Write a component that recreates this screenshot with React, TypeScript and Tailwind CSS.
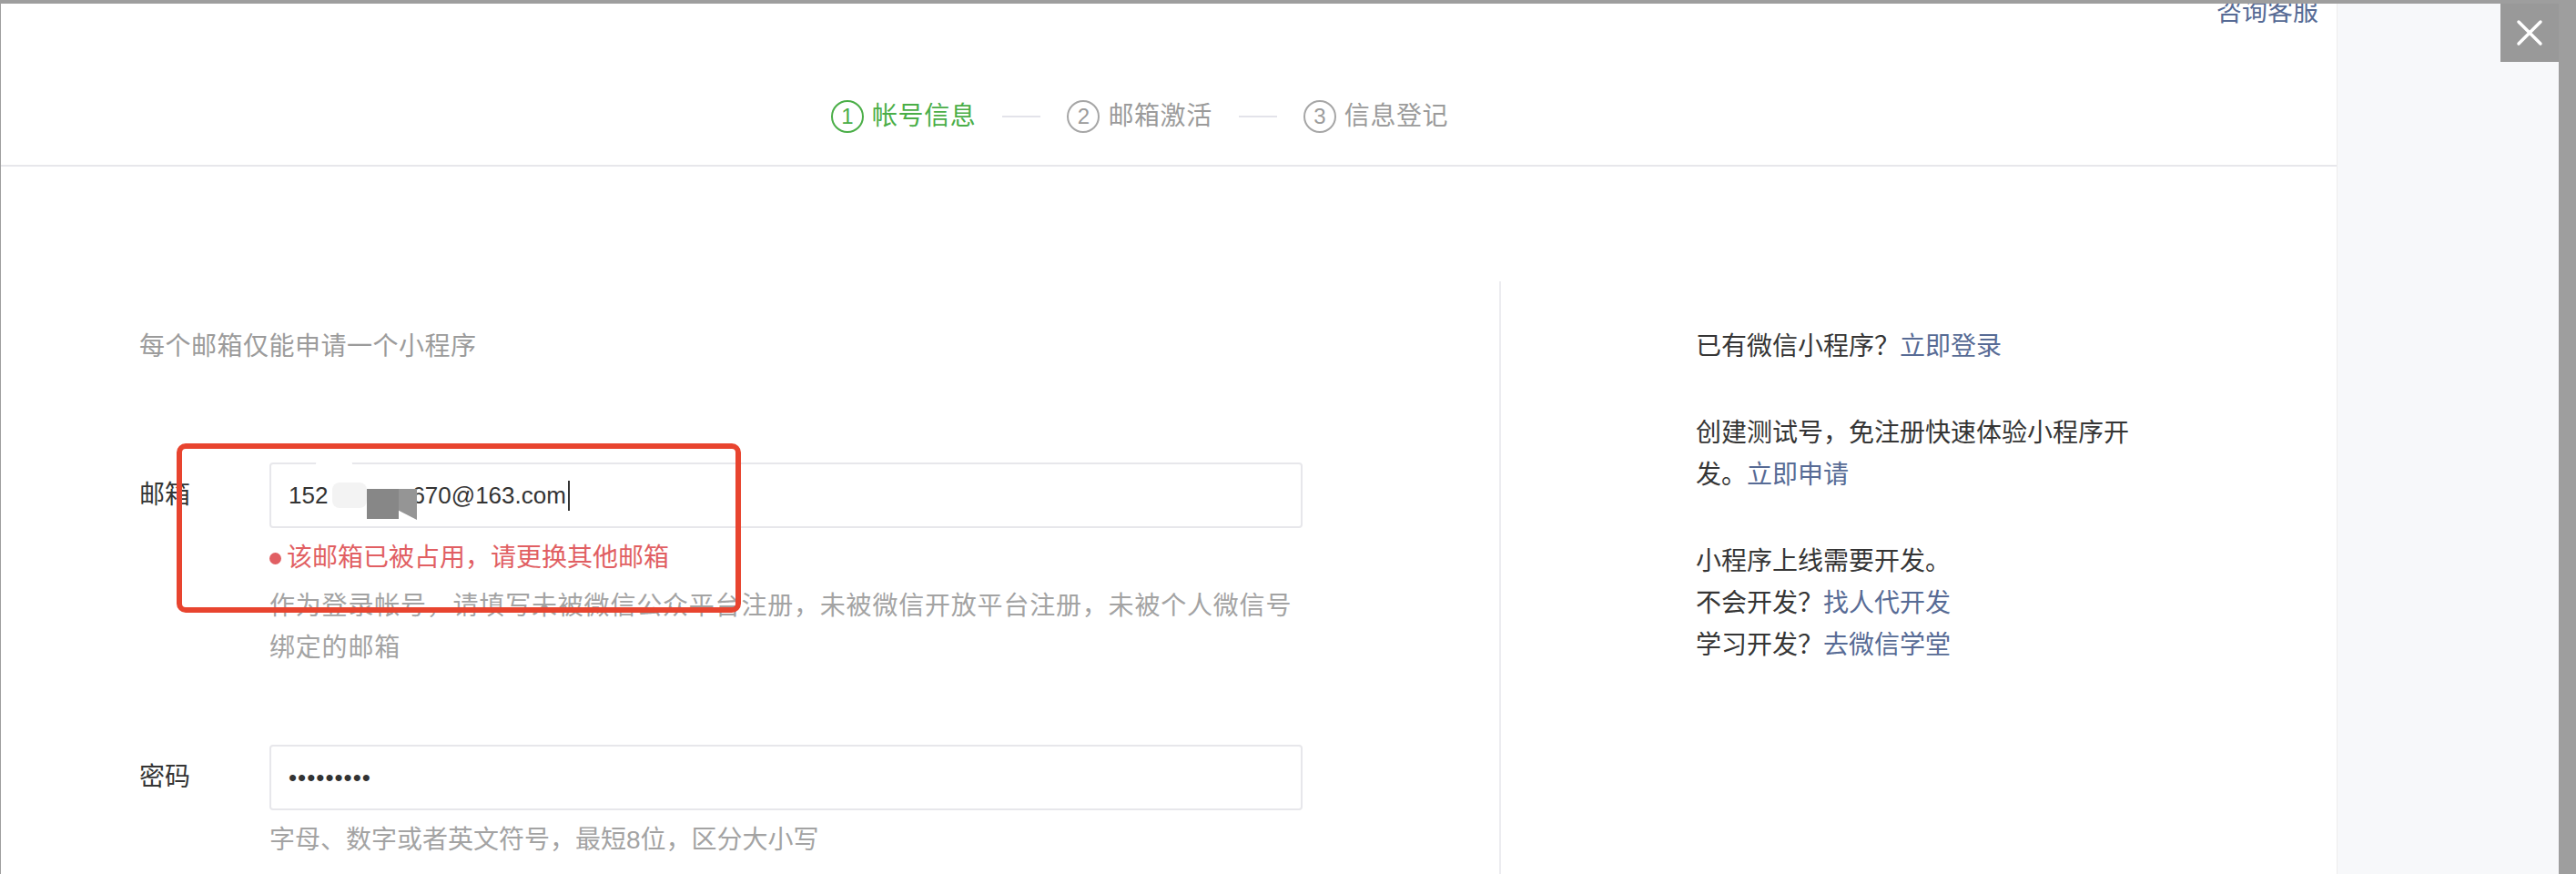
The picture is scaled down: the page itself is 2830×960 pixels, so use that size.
import { ReactNode } from 'react';

interface stepType {
	n: string;
	label: string;
	active?: boolean;
}

function Step(props: stepType) {
	return (
		<div className="flex items-center">
			<span
				className={
					props.active
						? 'flex h-[36px] w-[36px] items-center justify-center rounded-full border-2 border-[#4aae47] text-[24px] leading-none text-[#4aae47]'
						: 'flex h-[36px] w-[36px] items-center justify-center rounded-full border-2 border-[#a6a6a6] text-[24px] leading-none text-[#9b9b9b]'
				}
			>
				{props.n}
			</span>
			<span
				className={
					props.active
						? 'ml-[9px] text-[28px] leading-[40px] tracking-[0.6px] text-[#4aae47]'
						: 'ml-[9px] text-[28px] leading-[40px] tracking-[0.6px] text-[#9b9b9b]'
				}
			>
				{props.label}
			</span>
		</div>
	);
}

function StepLine() {
	return <span className="mx-[29px] h-[2px] w-[42px] bg-[#e3e3ea]" />;
}

function Link(props: { children: ReactNode }) {
	return <a className="text-[#576b95]">{props.children}</a>;
}

export default function App() {
	return (
		<div className="flex h-[960px] w-[2830px] bg-[#9e9e9e] pl-[1px] pt-[4px] font-['Liberation_Sans','Noto_Sans_CJK_SC',sans-serif]">
			<main className="flex w-[2566px] flex-col overflow-hidden bg-white">
				{/* header with steps */}
				<header className="flex h-[179px] shrink-0 flex-col border-b-2 border-[#e7e7eb]">
					<div className="-mt-[10px] flex h-[40px] justify-end pr-[20px]">
						<a className="text-[28px] leading-[40px] text-[#576b95]">咨询客服</a>
					</div>
					<div className="mt-[74px] flex items-center pl-[912px]">
						<Step n="1" label="帐号信息" active />
						<StepLine />
						<Step n="2" label="邮箱激活" />
						<StepLine />
						<Step n="3" label="信息登记" />
					</div>
				</header>

				<div className="flex flex-1 pt-[126px]">
					{/* form */}
					<section className="relative w-[1646px] pl-[152px] pt-[49px]">
						<p className="text-[28px] leading-[46px] tracking-[0.5px] text-[#9b9b9b]">每个邮箱仅能申请一个小程序</p>

						<div className="mt-[104px] flex">
							<label className="w-[143px] text-[28px] leading-[72px] text-[#353535]">邮箱</label>
							<div className="w-[1135px]">
								<div className="relative flex h-[72px] items-center rounded-[4px] border-2 border-[#e7e7eb] pl-[19px] text-[26px] text-[#333333]">
									<span>152</span>
									<span className="w-[92px]" />
									<span>670@163.com</span>
									<span className="ml-[2px] h-[33px] w-[2px] bg-[#333333]" />
									{/* redaction smudge */}
									<span className="absolute -top-[5px] left-[49px] h-[9px] w-[40px] rounded-full bg-white" />
									<span className="absolute left-[67px] top-[20px] h-[28px] w-[38px] rounded-[8px] bg-[#f3f3f3]" />
									<span className="absolute left-[105px] top-[27px] h-[33px] w-[35px] bg-[#878787]" />
									<span className="absolute left-[140px] top-[27px] h-[34px] w-[20px] bg-[#959595] [clip-path:polygon(0_0,100%_0,100%_100%,0_70%)]" />
								</div>
								<p className="mt-[10px] flex items-center text-[28px] leading-[46px] text-[#e15f63]">
									<span className="mr-[6px] h-[13px] w-[13px] rounded-full bg-[#e15f63]" />
									该邮箱已被占用，请更换其他邮箱
								</p>
								<p className="mt-[7px] whitespace-nowrap text-[28px] leading-[46px] tracking-[0.8px] text-[#a3a3a3]">
									<span>作为登录帐号，请填写未被微信公众平台注册，未被微信开放平台注册，未被个人微信号</span>
									<br />
									<span>绑定的邮箱</span>
								</p>
							</div>
						</div>

						<div className="mt-[83px] flex">
							<label className="w-[143px] text-[28px] leading-[72px] text-[#353535]">密码</label>
							<div className="w-[1135px]">
								<div className="flex h-[72px] items-center rounded-[4px] border-2 border-[#e7e7eb] pl-[19px] text-[26px] tracking-[1px] text-[#333333]">
									•••••••••
								</div>
								<p className="mt-[10px] text-[28px] leading-[46px] text-[#a3a3a3]">
									字母、数字或者英文符号，最短8位，区分大小写
								</p>
							</div>
						</div>

						{/* red annotation box */}
						<div className="absolute left-[193px] top-[178px] h-[186px] w-[620px] rounded-[10px] border-[6px] border-[#e8442f]" />
					</section>

					{/* side info */}
					<aside className="flex-1 border-l-2 border-[#ececf0] pl-[214px] pt-[49px] text-[28px] leading-[46px] text-[#353535]">
						<p>
							已有微信小程序？<Link>立即登录</Link>
						</p>
						<p className="mt-[49px]">
							<span>创建测试号，免注册快速体验小程序开</span>
							<br />
							<span>发。</span>
							<Link>立即申请</Link>
						</p>
						<div className="mt-[49px]">
							<p>小程序上线需要开发。</p>
							<p>
								不会开发？<Link>找人代开发</Link>
							</p>
							<p>
								学习开发？<Link>去微信学堂</Link>
							</p>
						</div>
					</aside>
				</div>
			</main>

			<aside className="flex w-[244px] items-start justify-end border-l border-[#ededed] bg-[#f7f8fa]">
				<button className="flex h-[64px] w-[64px] items-center justify-center bg-[#999999]">
					<svg width="30" height="30" viewBox="0 0 30 30" fill="none" stroke="white" strokeWidth="3.5" strokeLinecap="round">
						<path d="M3 3L27 27M27 3L3 27" />
					</svg>
				</button>
			</aside>
		</div>
	);
}
